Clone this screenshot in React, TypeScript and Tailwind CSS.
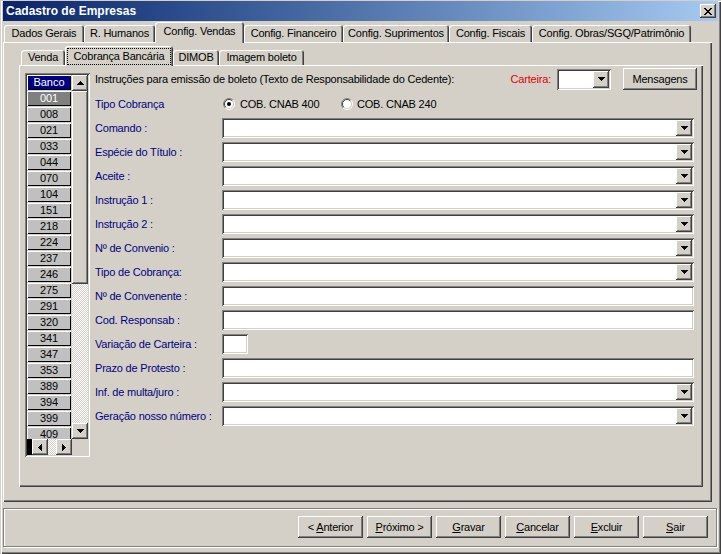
import React from "react";

const raised = "shadow-[inset_-1px_-1px_#404040,inset_1px_1px_#ffffff,inset_-2px_-2px_#808080,inset_2px_2px_#d4d0c8]";
const sunken = "shadow-[inset_1px_1px_#808080,inset_-1px_-1px_#ffffff,inset_2px_2px_#404040,inset_-2px_-2px_#d4d0c8]";
const panel = "shadow-[inset_1px_1px_#ffffff,inset_-1px_-1px_#404040,inset_-2px_-2px_#808080]";
const tabEdge = "shadow-[inset_1px_1px_#ffffff,inset_-1px_0_#404040,inset_-2px_0_#808080]";
const dither = "bg-[image:repeating-conic-gradient(#d4d0c8_0_25%,#ffffff_0_50%)] bg-[length:2px_2px]";

const outerTabs = [
  { label: "Dados Gerais", w: "w-[80px]" },
  { label: "R. Humanos", w: "w-[71px]" },
  { label: "Config. Vendas", w: "w-[89px]", active: true },
  { label: "Config. Financeiro", w: "w-[99px]" },
  { label: "Config. Suprimentos", w: "w-[106px]" },
  { label: "Config. Fiscais", w: "w-[83px]" },
  { label: "Config. Obras/SGQ/Patrimônio", w: "w-[159px]" },
];

const innerTabs = [
  { label: "Venda", w: "w-[44px]" },
  { label: "Cobrança Bancária", w: "w-[108px]", active: true },
  { label: "DIMOB", w: "w-[46px]" },
  { label: "Imagem boleto", w: "w-[85px]" },
];

const bancos = ["001", "008", "021", "033", "044", "070", "104", "151", "218", "224", "237", "246", "275", "291", "320", "341", "347", "353", "389", "394", "399", "409"];

const fields = [
  { label: "Comando :", kind: "combo" },
  { label: "Espécie do Título :", kind: "combo" },
  { label: "Aceite :", kind: "combo" },
  { label: "Instrução 1 :", kind: "combo" },
  { label: "Instrução 2 :", kind: "combo" },
  { label: "Nº de Convenio :", kind: "combo" },
  { label: "Tipo de Cobrança:", kind: "combo" },
  { label: "Nº de Convenente :", kind: "text" },
  { label: "Cod. Responsab :", kind: "text" },
  { label: "Variação de Carteira :", kind: "small" },
  { label: "Prazo de Protesto :", kind: "text" },
  { label: "Inf. de multa/juro :", kind: "combo" },
  { label: "Geração nosso número :", kind: "combo" },
];

function ArrowDown() {
  return (
    <svg width="7" height="4" viewBox="0 0 7 4" shapeRendering="crispEdges">
      <path d="M0 0h7v1H0zM1 1h5v1H1zM2 2h3v1H2zM3 3h1v1H3z" fill="#000" />
    </svg>
  );
}

function ArrowUp() {
  return (
    <svg width="7" height="4" viewBox="0 0 7 4" shapeRendering="crispEdges">
      <path d="M3 0h1v1H3zM2 1h3v1H2zM1 2h5v1H1zM0 3h7v1H0z" fill="#000" />
    </svg>
  );
}

function ArrowLeft() {
  return (
    <svg width="4" height="7" viewBox="0 0 4 7" shapeRendering="crispEdges">
      <path d="M0 3h1v1H0zM1 2h1v3H1zM2 1h1v5H2zM3 0h1v7H3z" fill="#000" />
    </svg>
  );
}

function ArrowRight() {
  return (
    <svg width="4" height="7" viewBox="0 0 4 7" shapeRendering="crispEdges">
      <path d="M0 0h1v7H0zM1 1h1v5H1zM2 2h1v3H2zM3 3h1v1H3z" fill="#000" />
    </svg>
  );
}

function Radio({ checked }: { checked?: boolean }) {
  return (
    <svg width="12" height="12" viewBox="0 0 12 12" className="shrink-0">
      <circle cx="6" cy="6" r="4.5" fill="#fff" />
      <path d="M2.1 9.9A5.5 5.5 0 0 1 9.9 2.1" stroke="#808080" fill="none" />
      <path d="M9.9 2.1A5.5 5.5 0 0 1 2.1 9.9" stroke="#fff" fill="none" />
      <path d="M2.8 9.2A4.5 4.5 0 0 1 9.2 2.8" stroke="#404040" fill="none" />
      <path d="M9.2 2.8A4.5 4.5 0 0 1 2.8 9.2" stroke="#d4d0c8" fill="none" />
      {checked && <circle cx="6" cy="6" r="2" fill="#000" />}
    </svg>
  );
}

function Combo({ className }: { className: string }) {
  return (
    <div className={`${className} bg-white ${sunken} p-[2px] flex justify-end`}>
      <div className={`w-[16px] h-full bg-[#d4d0c8] ${raised} flex items-center justify-center`}>
        <ArrowDown />
      </div>
    </div>
  );
}

function ScrollBtn({ children, className }: { children: React.ReactNode; className: string }) {
  return (
    <div className={`${className} bg-[#d4d0c8] ${raised} flex items-center justify-center shrink-0`}>
      {children}
    </div>
  );
}

function BancoGrid() {
  return (
    <div className={`w-[65px] h-[384px] ${sunken} p-[2px] flex flex-col shrink-0`}>
      <div className="h-[364px] flex gap-[1px]">
        <div className="w-[44px] h-full flex flex-col gap-[1px] overflow-hidden">
          <div className="h-[15px] shrink-0 bg-[#000080] text-white text-center leading-[15px] tracking-normal shadow-[inset_1px_1px_#ffffff,inset_-1px_-1px_#000000]">
            Banco
          </div>
          {bancos.map((b, i) => (
            <div
              key={b}
              className={
                i === 0
                  ? "h-[15px] shrink-0 bg-[#808080] text-white text-center leading-[15px] shadow-[inset_1px_1px_#ffffff,inset_-1px_-1px_#000000]"
                  : "h-[15px] shrink-0 bg-[#c0c0c0] text-black text-center leading-[15px] shadow-[inset_1px_1px_#ffffff,inset_-1px_-1px_#000000]"
              }
            >
              {b}
            </div>
          ))}
        </div>
        <div className="w-[16px] h-full flex flex-col">
          <ScrollBtn className="h-[16px]">
            <ArrowUp />
          </ScrollBtn>
          <div className={`h-[193px] bg-[#d4d0c8] ${raised}`} />
          <div className={`flex-1 ${dither}`} />
          <ScrollBtn className="h-[16px]">
            <ArrowDown />
          </ScrollBtn>
        </div>
      </div>
      <div className="h-[16px] flex">
        <div className="w-[5px] bg-black" />
        <ScrollBtn className="w-[16px] h-full">
          <ArrowLeft />
        </ScrollBtn>
        <div className={`w-[8px] ${dither}`} />
        <ScrollBtn className="w-[16px] h-full">
          <ArrowRight />
        </ScrollBtn>
        <div className="flex-1" />
      </div>
    </div>
  );
}

function Form() {
  return (
    <div className="w-[602px] mt-[3px] ml-[5px] flex flex-col">
      <div className="h-[22px] flex items-center">
        <span className="flex-1">Instruções para emissão de boleto (Texto de Responsabilidade do Cedente):</span>
        <span className="text-[#e00000] mr-[6px]">Carteira:</span>
        <Combo className="w-[54px] h-[21px]" />
        <button className={`ml-[12px] w-[74px] h-[22px] bg-[#d4d0c8] ${raised}`}>Mensagens</button>
      </div>
      <div className="mt-[2px] h-[24px] flex items-center">
        <span className="w-[128px] text-[#000080]">Tipo Cobrança</span>
        <div className="w-[118px] flex items-center gap-[5px]">
          <Radio checked />
          <span>COB. CNAB 400</span>
        </div>
        <div className="flex items-center gap-[4px]">
          <Radio />
          <span>COB. CNAB 240</span>
        </div>
      </div>
      <div className="mt-[2px] flex flex-col gap-[4px]">
        {fields.map((f) => (
          <div key={f.label} className="h-[20px] flex items-center">
            <span className="w-[127px] text-[#000080] whitespace-nowrap">{f.label}</span>
            {f.kind === "combo" && <Combo className="w-[472px] h-[20px]" />}
            {f.kind === "text" && <div className={`w-[472px] h-[20px] bg-white ${sunken}`} />}
            {f.kind === "small" && <div className={`w-[26px] h-[20px] bg-white ${sunken}`} />}
          </div>
        ))}
      </div>
    </div>
  );
}

export default function App() {
  return (
    <div className="w-[721px] h-[554px] overflow-hidden bg-[#d4d0c8] text-[11px] tracking-[-0.2px] text-black font-['Liberation_Sans',Arial,sans-serif] shadow-[inset_1px_1px_#d4d0c8,inset_2px_2px_#ffffff,inset_-1px_-1px_#404040,inset_-2px_-2px_#808080] pt-[1px] px-[3px] flex flex-col select-none">
      {/* title bar */}
      <div className="h-[20px] flex items-center justify-between bg-linear-to-r from-[#0a246a] to-[#a6caf0] pl-[3px] pr-[2px]">
        <span className="text-white font-bold text-[12px] tracking-normal">Cadastro de Empresas</span>
        <div className={`w-[16px] h-[14px] bg-[#d4d0c8] ${raised} flex items-center justify-center`}>
          <svg width="8" height="7" viewBox="0 0 8 7" shapeRendering="crispEdges">
            <path
              d="M0 0h2v1H0zM6 0h2v1H6zM1 1h2v1H1zM5 1h2v1H5zM2 2h4v1H2zM3 3h2v1H3zM2 4h4v1H2zM1 5h2v1H1zM5 5h2v1H5zM0 6h2v1H0zM6 6h2v1H6z"
              fill="#000"
            />
          </svg>
        </div>
      </div>

      {/* outer tabs */}
      <div className="h-[21px] flex items-end pl-[1px]">
        {outerTabs.map((t) =>
          t.active ? (
            <div key={t.label} className={`${t.w} h-[21px] -mb-[1px] relative z-10 bg-[#d4d0c8] rounded-t-[3px] ${tabEdge} flex items-center justify-center pb-[2px]`}>
              {t.label}
            </div>
          ) : (
            <div key={t.label} className={`${t.w} h-[17px] rounded-t-[3px] ${tabEdge} flex items-center justify-center`}>
              {t.label}
            </div>
          )
        )}
      </div>

      {/* outer panel */}
      <div className={`w-[709px] h-[460px] ${panel} pl-[16px] pt-[4px] flex flex-col`}>
        <div className="h-[19px] flex items-end pl-[2px]">
          {innerTabs.map((t) =>
            t.active ? (
              <div key={t.label} className={`${t.w} h-[20px] -mb-[1px] relative z-10 bg-[#d4d0c8] rounded-t-[3px] ${tabEdge} px-[2px] pt-[2px] pb-[1px]`}>
                <div className="w-full h-full border border-dotted border-black flex items-center justify-center">
                  {t.label}
                </div>
              </div>
            ) : (
              <div key={t.label} className={`${t.w} h-[15px] rounded-t-[3px] ${tabEdge} flex items-center justify-center`}>
                {t.label}
              </div>
            )
          )}
        </div>

        <div className={`w-[684px] h-[422px] ${panel} flex items-start`}>
          <div className="mt-[8px] ml-[6px]">
            <BancoGrid />
          </div>
          <Form />
        </div>
      </div>

      {/* button bar */}
      <div className="mt-[6px] w-[714px] h-[39px] border border-[#808080] shadow-[inset_1px_1px_#ffffff,1px_1px_#ffffff] flex justify-end gap-[4px] pt-[7px] pr-[8px]">
        {[
          ["< ", "A", "nterior"],
          ["", "P", "róximo >"],
          ["", "G", "ravar"],
          ["", "C", "ancelar"],
          ["", "E", "xcluir"],
          ["", "S", "air"],
        ].map(([pre, key, rest]) => (
          <button key={key} className={`w-[65px] h-[22px] bg-[#d4d0c8] ${raised}`}>
            {pre}
            <span className="underline">{key}</span>
            {rest}
          </button>
        ))}
      </div>
    </div>
  );
}
